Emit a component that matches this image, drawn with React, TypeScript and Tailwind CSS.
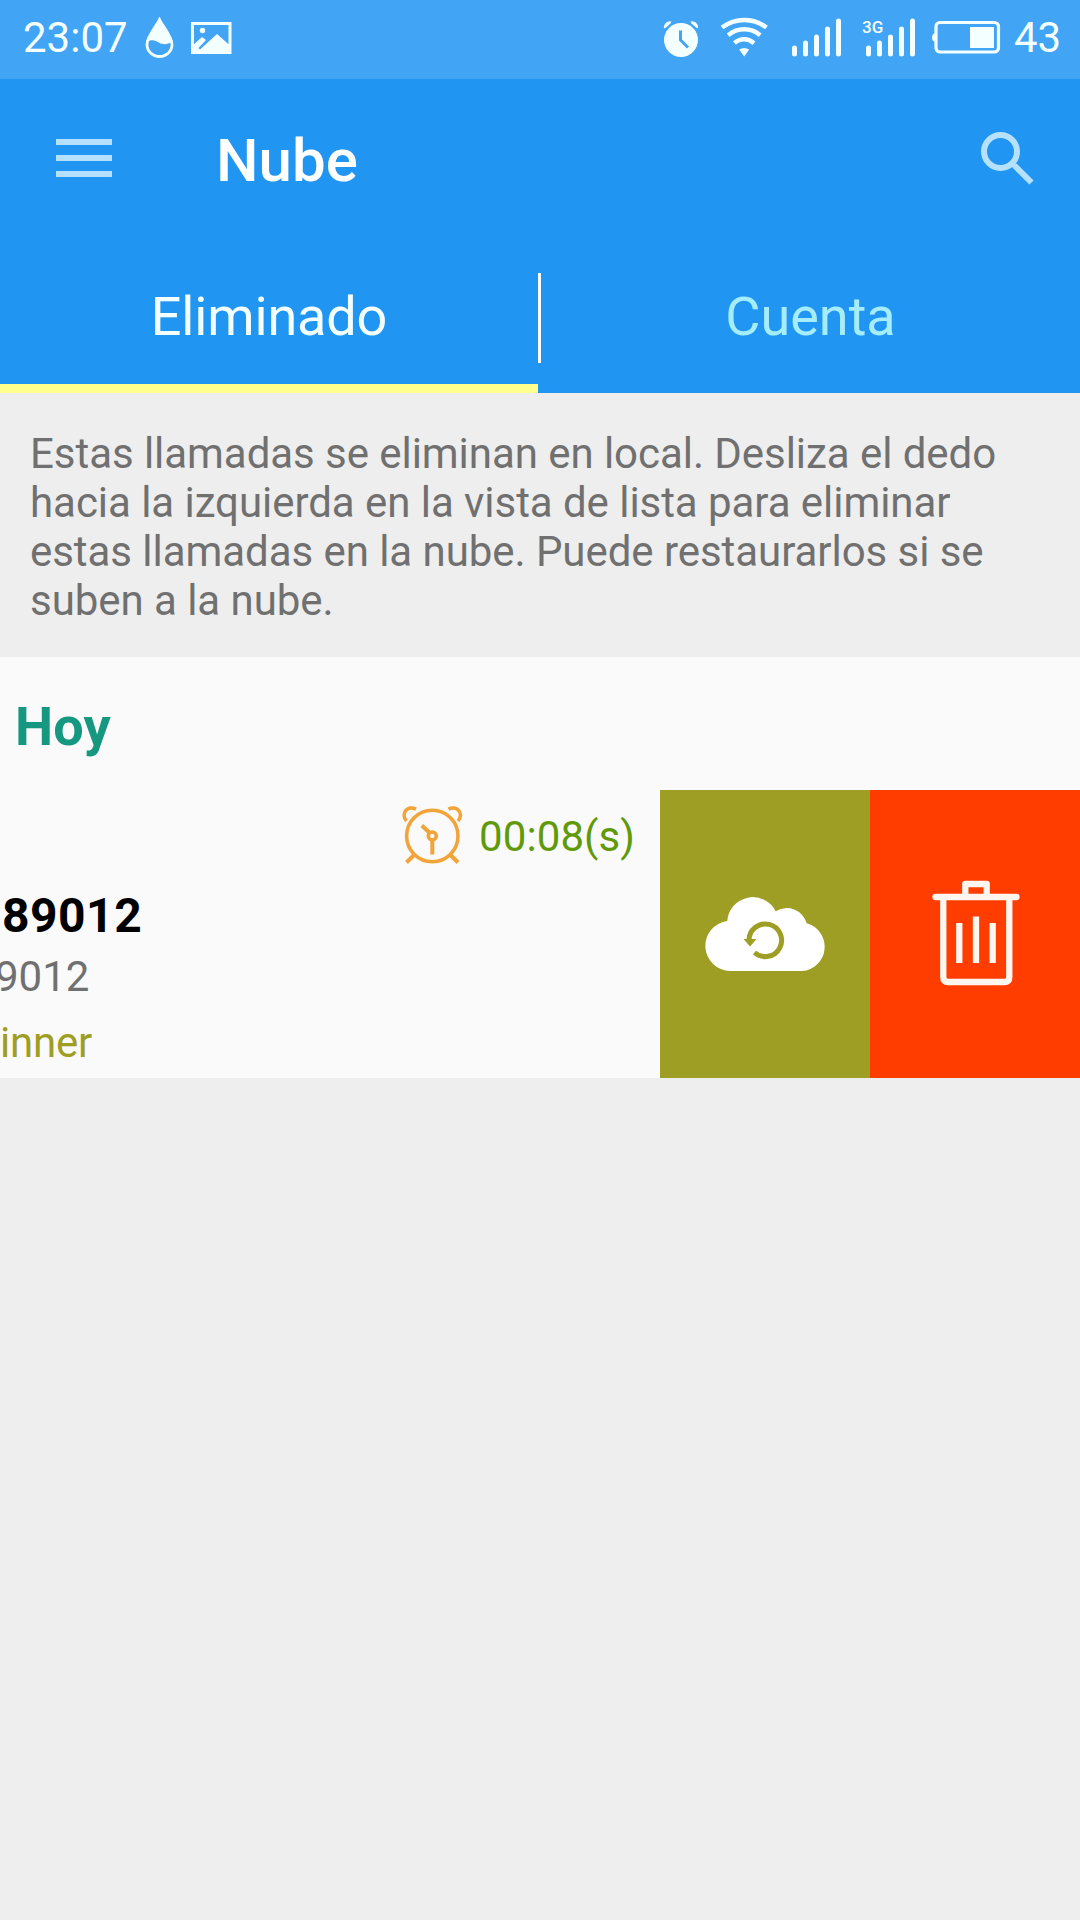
import { clsx } from "clsx";

const tabs = [
  { id: "deleted", label: "Eliminado" },
  { id: "account", label: "Cuenta" },
];

const calls = [
  { id: 1, duration: "00:08(s)", name: "89012", number: "9012", note: "inner" },
];

function SignalIcon() {
  return (
    <svg width="50" height="39" viewBox="0 0 50 39" stroke="currentColor" strokeWidth="5" strokeLinecap="round">
      <path d="M2.5 30v6M13.5 25v11M24.5 19v17M35.5 11v25M46.5 3v33" />
    </svg>
  );
}

function StatusBar() {
  return (
    <div className="flex h-[79px] items-start bg-[#41a4f4] text-[#f4ffff]">
      <span className="mt-[13px] ml-[23px] w-[106px] shrink-0 text-[42px] leading-[49px]">23:07</span>

      {/* half-filled drop */}
      <svg className="mt-[17px] ml-4 shrink-0" width="29" height="42" viewBox="0 0 29 42">
        <path
          d="M14.5 2.5C12 8 2 20 2 27.5a12.5 12 0 0 0 25 0C27 20 17 8 14.5 2.5Z"
          fill="none"
          stroke="currentColor"
          strokeWidth="2.8"
        />
        <path d="M14.5 1C11 9 1.5 19 1.2 25c6-3 9-1.5 13 .8 4.5 2.4 8 1.5 13.5-1C27 19 18 9 14.5 1Z" fill="currentColor" />
      </svg>

      {/* picture */}
      <svg className="mt-[22px] ml-[17px] shrink-0" width="41" height="32" viewBox="0 0 41 32">
        <path d="M1.5 1.5h37.5v29h-37.5z" fill="none" stroke="currentColor" strokeWidth="3" />
        <circle cx="11.5" cy="8.5" r="2.7" fill="currentColor" />
        <path d="M1 24 11 15l4 3L7.5 26l1.5 1.5L26 12 39 23.5V31H1Z" fill="currentColor" />
      </svg>

      {/* alarm */}
      <svg className="mt-5 ml-[431px] shrink-0" width="36" height="38" viewBox="0 0 36 38">
        <circle cx="18" cy="20" r="17" fill="currentColor" />
        <path d="M1 8.5A6 6 0 0 1 8.5 1.5L7.5 3.5 3 7.5ZM35 8.5A6 6 0 0 0 27.5 1.5l1 2L33 7.5Z" fill="currentColor" />
        <path d="M17.5 10.5v9.5l7.5 7.5" fill="none" stroke="#41a4f4" strokeWidth="3" />
      </svg>

      {/* wifi */}
      <svg className="mt-[17px] ml-[21px] shrink-0" width="50" height="42" viewBox="0 0 50 42" fill="none" stroke="currentColor" strokeWidth="4.5">
        <path d="M2 10.5C15.5 .5 33 .5 46.500 10.5M8.2 18.2c9.5-7.8 22.500-7.8 32 0M14.5 26.2c5.5-5.2 13.5-5.2 19.5 0" />
        <path d="M19.2 32.5q5-3 10 0L24.2 39.5Z" fill="currentColor" stroke="none" />
      </svg>

      <div className="mt-[18px] ml-[22px] shrink-0">
        <SignalIcon />
      </div>

      <div className="relative mt-[18px] ml-[22px] shrink-0 pl-[2px]">
        <span className="absolute -top-[1px] -left-[2px] text-[17px] leading-[20px] font-medium">3G</span>
        <SignalIcon />
      </div>

      {/* battery */}
      <svg className="mt-5 ml-4 shrink-0" width="69" height="35" viewBox="0 0 69 35">
        <rect x="4" y="2.5" width="62.5" height="29.5" rx="4" fill="none" stroke="currentColor" strokeWidth="3.2" />
        <path d="M3 13v9q-3-1-3-4.5T3 13Z" fill="currentColor" />
        <rect x="38" y="7" width="24" height="21" fill="currentColor" />
      </svg>
      <span className="mt-[13px] ml-[13px] shrink-0 text-[42px] leading-[49px]">43</span>
    </div>
  );
}

function AppBar() {
  return (
    <header className="flex h-[166px] items-start text-white">
      <button type="button" aria-label="Menu" className="mt-[60px] ml-14">
        <svg width="56" height="38" viewBox="0 0 56 38" fill="#b5e1fc">
          <path d="M0 0h56v6H0zM0 16h56v6H0zM0 32h56v6H0z" />
        </svg>
      </button>
      <h1 className="mt-[47px] ml-[104px] text-[60px] leading-[70px] font-medium">Nube</h1>
      <button type="button" aria-label="Buscar" className="mt-[53px] mr-[46px] ml-auto">
        <svg width="53" height="53" viewBox="0 0 53 53" fill="none" stroke="#b5e1fc">
          <circle cx="19.5" cy="19.5" r="16.5" strokeWidth="6" />
          <path d="M33.5 33.5 50.5 50.5" strokeWidth="6" />
          <path d="m30.5 31 4 4" strokeWidth="4.5" />
        </svg>
      </button>
    </header>
  );
}

function Tabs({ active }: { active: string }) {
  return (
    <nav className="flex h-[148px]">
      {tabs.map((tab, i) => (
        <div key={tab.id} className={clsx("flex", i === 0 ? "w-[538px]" : "flex-1")}>
          {i > 0 && <div className="mt-[28px] h-[90px] w-[3px] bg-white" />}
          <button
            type="button"
            className={clsx(
              "flex flex-1 justify-center pt-[40px] text-[54px] leading-[63px]",
              tab.id === active
                ? "border-b-[9px] border-[#ffff8d] tracking-[-0.15px] text-[#f4ffff]"
                : "text-[#a5edfb]"
            )}
          >
            {tab.label}
          </button>
        </div>
      ))}
    </nav>
  );
}

function ClockIcon() {
  return (
    <svg width="62" height="60" viewBox="0 0 62 60" fill="none" stroke="#f2a439" strokeWidth="3.6">
      <circle cx="31.3" cy="30" r="25.7" />
      <path d="M5.5 15C-.5 8 6-1.5 15 3.2M57 15C63 8 56.5-1.5 47.5 3.2" />
      <path d="m13.5 48.5-8 8M49 48.5l8 8" strokeWidth="4" />
      <circle cx="31.3" cy="30" r="4" />
      <path d="M31.3 34.5v14M28.3 26.5 20.8 19.5" strokeWidth="4" />
    </svg>
  );
}

function RestoreIcon() {
  return (
    <svg width="120" height="75" viewBox="0 0 120 75" fill="none">
      <path
        d="M25 74A25.1 25.1 0 0 1 22.3 24A25.6 25.6 0 0 1 70.7 14.2A20.8 20.8 0 0 1 101.7 26.3A24.3 24.3 0 0 1 97 74Z"
        fill="#fff"
      />
      <path d="M44 43.5A16.3 16.3 0 1 1 49.5 55.5" stroke="#9e9d24" strokeWidth="5" />
      <path d="M38.5 42H51.5L45 49.5Z" fill="#9e9d24" />
    </svg>
  );
}

function TrashIcon() {
  return (
    <svg width="88" height="106" viewBox="0 0 88 106" fill="none" stroke="#fff6f0" strokeWidth="6.3" strokeLinejoin="round">
      <path d="M3.5 17h81" strokeLinecap="round" />
      <path d="M33.3 16V4h21.4v12" />
      <path d="M11.3 18v79q0 5 5 5h56q5 0 5-5V18" />
      <path d="M27.3 43v40M44 36.5v46.5M60.7 43v40" />
    </svg>
  );
}

export default function App() {
  return (
    <div className="flex min-h-[1920px] w-[1080px] flex-col overflow-hidden bg-[#eeeeee] font-[Roboto,sans-serif]">
      <div className="bg-[#2095f2]">
        <StatusBar />
        <AppBar />
        <Tabs active="deleted" />
      </div>

      <p className="h-[264px] pt-[36px] pl-[30px] text-[42px] leading-[49px] tracking-[-0.05px] text-[#707070]">
        Estas llamadas se eliminan en local. Desliza el dedo
        <br />
        hacia la izquierda en la vista de lista para eliminar
        <br />
        estas llamadas en la nube. Puede restaurarlos si se
        <br />
        suben a la nube.
      </p>

      <section className="bg-[#fafafa]">
        <h2 className="h-[133px] pt-[38px] pl-[15px] text-[54px] leading-[63px] font-bold tracking-[0.2px] text-[#16977f]">Hoy</h2>

        {calls.map((call) => (
          <div key={call.id} className="flex h-[288px]">
            {/* row content, swiped partly off the left edge */}
            <div className="flex w-[660px] flex-col overflow-hidden">
              <div className="flex h-[98px] items-start pt-[16px] pl-[401px]">
                <ClockIcon />
                <span className="mt-[6px] ml-[16px] text-[42px] leading-[49px] tracking-[0.1px] text-[#609a0b]">{call.duration}</span>
              </div>
              <div className="ml-[2px] text-[48px] leading-[56px] font-bold tracking-[0.5px] text-black">{call.name}</div>
              <div className="mt-[8px] -ml-[5px] text-[42px] leading-[49px] text-[#707070]">{call.number}</div>
              <div className="mt-[17px] text-[42px] leading-[49px] tracking-[-0.2px] text-[#9e9d24]">{call.note}</div>
            </div>
            <button type="button" aria-label="Restaurar" className="flex w-[210px] items-center justify-center bg-[#9e9d24]">
              <RestoreIcon />
            </button>
            <button type="button" aria-label="Eliminar" className="flex w-[210px] items-start justify-center bg-[#ff3d00] pt-[90px] pl-[2px]">
              <TrashIcon />
            </button>
          </div>
        ))}
      </section>
    </div>
  );
}
